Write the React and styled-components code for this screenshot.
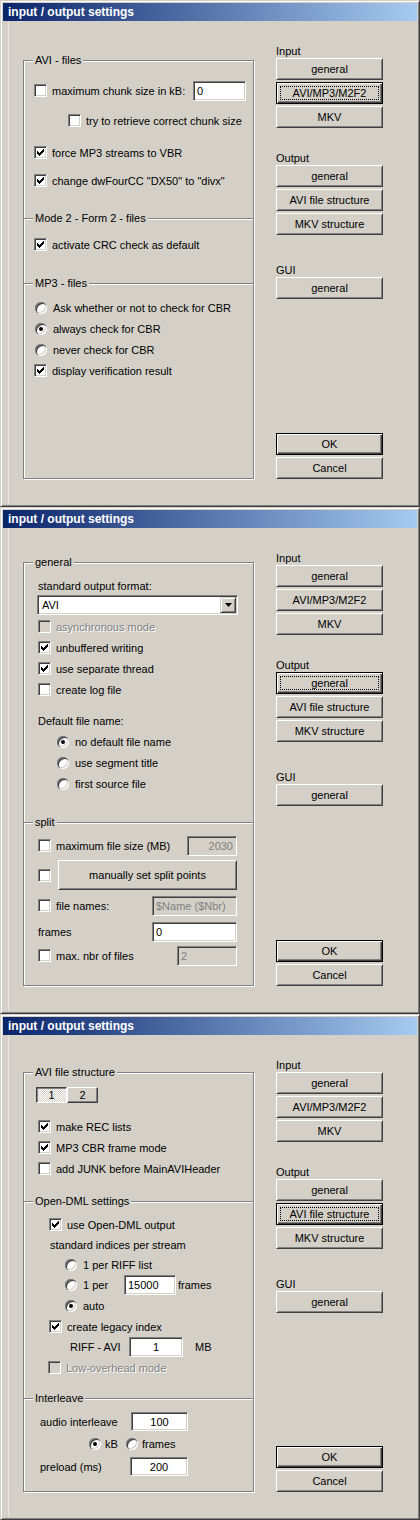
import React from "react";
import styled, { createGlobalStyle, css } from "styled-components";

const GlobalStyle = createGlobalStyle`
  html, body { margin: 0; padding: 0; background: #d4d0c8; }
  body {
    font-family: "Liberation Sans", Arial, sans-serif;
    font-size: 11px;
    color: #000;
  }
`;

const Page = styled.div`
  width: 420px;
  display: flex;
  flex-direction: column;
`;

const Window = styled.div`
  box-sizing: border-box;
  width: 420px;
  height: ${(p) => p.$h || 507}px;
  background: #d4d0c8;
  border: 1px solid;
  border-color: #d4d0c8 #404040 #404040 #d4d0c8;
  box-shadow: inset 1px 1px 0 #fff, inset -1px -1px 0 #808080;
  padding: 2px;
  display: flex;
  flex-direction: column;
  overflow: hidden;
`;

const TitleBar = styled.div`
  flex: none;
  height: 18px;
  line-height: 18px;
  padding-left: 5px;
  background: linear-gradient(to right, #0a246a, #a6caf0);
  color: #fff;
  font-weight: bold;
  font-size: 12px;
`;

const Body = styled.div`
  flex: 1;
  display: flex;
  margin-left: 5px;
  padding-left: 14px;
  border-left: 1px solid #e9e7e1;
`;

const LeftCol = styled.div`
  width: 231px;
  display: flex;
  flex-direction: column;
  padding-bottom: 25px;
`;

const GroupBox = styled.div`
  flex: 1;
  display: flex;
  flex-direction: column;
  margin-top: ${(p) => p.$top - 21}px;
  border: 1px solid #808080;
  box-shadow: inset 1px 1px 0 #fff, 1px 1px 0 #fff;
`;

const Section = styled.div`
  display: flex;
  flex-direction: column;
  ${(p) =>
    p.$mt !== undefined &&
    css`
      margin-top: ${p.$mt}px;
      border-top: 1px solid #808080;
      box-shadow: inset 0 1px 0 #fff;
    `}
`;

const Legend = styled.div`
  display: flex;
  height: 13px;
  line-height: 13px;
  margin: -7px 0 -6px 9px;
`;

const LegendText = styled.span`
  background: #d4d0c8;
  padding: 0 2px;
`;

const Row = styled.div`
  flex: none;
  display: flex;
  align-items: center;
  height: ${(p) => p.$h ?? 21}px;
  margin-top: ${(p) => p.$mt ?? 0}px;
  padding-left: ${(p) => (p.$x ?? 24) - 24}px;
  padding-right: ${(p) => p.$pr ?? 0}px;
`;

const Text = styled.span`
  flex: none;
  white-space: nowrap;
  width: ${(p) => (p.$w ? `${p.$w}px` : "auto")};
  margin-left: ${(p) => p.$ml ?? 0}px;
  color: ${(p) => (p.$disabled ? "#808080" : "#000")};
  text-shadow: ${(p) => (p.$disabled ? "1px 1px 0 #fff" : "none")};
`;

const OptionWrap = styled.div`
  flex: none;
  display: flex;
  align-items: center;
  gap: ${(p) => p.$gap}px;
  width: ${(p) => (p.$w ? `${p.$w}px` : "auto")};
`;

const CheckBox = styled.span`
  box-sizing: border-box;
  flex: none;
  width: 13px;
  height: 13px;
  background: ${(p) => (p.$disabled ? "#d4d0c8" : "#fff")};
  border: 1px solid;
  border-color: #808080 #fff #fff #808080;
  box-shadow: inset 1px 1px 0 #404040, inset -1px -1px 0 #d4d0c8;
  display: flex;
  align-items: center;
  justify-content: center;
`;

const RadioBox = styled.span`
  flex: none;
  width: 12px;
  height: 12px;
  border-radius: 50%;
  background: #fff;
  box-shadow: inset 1px 1px 0 #808080, inset 2px 2px 0 #404040,
    inset -1px -1px 0 #fff, inset -2px -2px 0 #d4d0c8;
  display: flex;
  align-items: center;
  justify-content: center;
  &::after {
    content: "";
    width: 4px;
    height: 4px;
    border-radius: 50%;
    background: ${(p) => (p.$on ? "#000" : "transparent")};
  }
`;

const TextBox = styled.div`
  box-sizing: border-box;
  flex: none;
  width: ${(p) => p.$w}px;
  height: ${(p) => p.$h ?? 20}px;
  margin-left: ${(p) => (p.$auto ? "auto" : "0")};
  padding: 0 3px;
  background: ${(p) => (p.$disabled ? "#d4d0c8" : "#fff")};
  color: ${(p) => (p.$disabled ? "#808080" : "#000")};
  border: 1px solid;
  border-color: #808080 #fff #fff #808080;
  box-shadow: inset 1px 1px 0 #404040, inset -1px -1px 0 #d4d0c8;
  display: flex;
  align-items: center;
  white-space: nowrap;
  overflow: hidden;
  justify-content: ${(p) =>
    p.$align === "right" ? "flex-end" : p.$align === "center" ? "center" : "flex-start"};
`;

const Combo = styled.div`
  box-sizing: border-box;
  width: 201px;
  height: 20px;
  padding: 1px 1px 1px 4px;
  background: #fff;
  border: 1px solid;
  border-color: #808080 #fff #fff #808080;
  box-shadow: inset 1px 1px 0 #404040, inset -1px -1px 0 #d4d0c8;
  display: flex;
  align-items: center;
`;

const ComboValue = styled.span`
  flex: 1;
`;

const ComboArrow = styled.div`
  box-sizing: border-box;
  width: 16px;
  height: 16px;
  background: #d4d0c8;
  border: 1px solid;
  border-color: #d4d0c8 #404040 #404040 #d4d0c8;
  box-shadow: inset 1px 1px 0 #fff, inset -1px -1px 0 #808080;
  display: flex;
  align-items: center;
  justify-content: center;
`;

const Button = styled.div`
  box-sizing: border-box;
  position: relative;
  flex: none;
  width: ${(p) => p.$w ?? 107}px;
  height: ${(p) => p.$h ?? 22}px;
  margin-left: ${(p) => (p.$auto ? "auto" : "0")};
  background: #d4d0c8;
  border: 1px solid;
  border-color: #fff #404040 #404040 #fff;
  box-shadow: inset 1px 1px 0 #d4d0c8, inset -1px -1px 0 #808080;
  display: flex;
  align-items: center;
  justify-content: center;
  white-space: nowrap;
  ${(p) =>
    (p.$default || p.$focus) &&
    css`
      border-color: #000;
      box-shadow: inset 1px 1px 0 #fff, inset -1px -1px 0 #404040,
        inset -2px -2px 0 #808080;
    `}
  ${(p) =>
    p.$focus &&
    css`
      &::after {
        content: "";
        position: absolute;
        inset: 3px;
        border: 1px dotted #000;
      }
    `}
`;

const Tab = styled.div`
  box-sizing: border-box;
  width: 31px;
  height: 16px;
  display: flex;
  align-items: center;
  justify-content: center;
  border: 1px solid;
  ${(p) =>
    p.$pressed
      ? css`
          border-color: #404040 #fff #fff #404040;
          box-shadow: inset 1px 1px 0 #808080;
          background: repeating-conic-gradient(#fff 0 25%, #d4d0c8 0 50%) 0 0 / 2px 2px;
        `
      : css`
          border-color: #fff #404040 #404040 #fff;
          box-shadow: inset -1px -1px 0 #808080;
          background: #d4d0c8;
        `}
`;

const RightCol = styled.div`
  width: 107px;
  margin-left: 22px;
  padding: 24px 0 25px;
  display: flex;
  flex-direction: column;
`;

const SideLabel = styled.div`
  height: 13px;
  line-height: 13px;
  margin-top: ${(p) => p.$mt ?? 0}px;
`;

const BtnStack = styled.div`
  display: flex;
  flex-direction: column;
  gap: 2px;
  margin-top: ${(p) => (p.$bottom ? "auto" : "0")};
`;

const CheckMark = ({ color }) => (
  <svg width="7" height="7" viewBox="0 0 7 7">
    <path
      fill={color}
      d="M6 0h1v1h-1zM5 1h2v1h-2zM0 2h1v1h-1zM4 2h3v1h-3zM0 3h2v1h-2zM3 3h3v1h-3zM0 4h5v1h-5zM1 5h3v1h-3zM2 6h1v1h-1z"
    />
  </svg>
);

const Check = ({ on, disabled }) => (
  <CheckBox $disabled={disabled}>{on && <CheckMark color={disabled ? "#808080" : "#000"} />}</CheckBox>
);

const Option = ({ radio, on, disabled, label, w, gap }) => (
  <OptionWrap $w={w} $gap={gap ?? (radio ? 6 : 5)}>
    {radio ? <RadioBox $on={on} /> : <Check on={on} disabled={disabled} />}
    <Text $disabled={disabled}>{label}</Text>
  </OptionWrap>
);

const Group = ({ label, mt, children }) => (
  <Section $mt={mt}>
    <Legend>
      <LegendText>{label}</LegendText>
    </Legend>
    {children}
  </Section>
);

const SidePanel = ({ focus }) => (
  <RightCol>
    <SideLabel>Input</SideLabel>
    <BtnStack>
      <Button $focus={focus === "in-general"}>general</Button>
      <Button $focus={focus === "avi-mp3"}>AVI/MP3/M2F2</Button>
      <Button>MKV</Button>
    </BtnStack>
    <SideLabel $mt={24}>Output</SideLabel>
    <BtnStack>
      <Button $focus={focus === "out-general"}>general</Button>
      <Button $focus={focus === "avi-struct"}>AVI file structure</Button>
      <Button>MKV structure</Button>
    </BtnStack>
    <SideLabel $mt={29}>GUI</SideLabel>
    <BtnStack>
      <Button>general</Button>
    </BtnStack>
    <BtnStack $bottom>
      <Button $default>OK</Button>
      <Button>Cancel</Button>
    </BtnStack>
  </RightCol>
);

const Dialog = ({ h, focus, children }) => (
  <Window $h={h}>
    <TitleBar>input / output settings</TitleBar>
    <Body>
      <LeftCol>{children}</LeftCol>
      <SidePanel focus={focus} />
    </Body>
  </Window>
);

const DownArrow = () => (
  <svg width="7" height="4" viewBox="0 0 7 4">
    <path d="M0 0h7L3.5 4z" fill="#000" />
  </svg>
);

const InputFiles = () => (
  <Dialog focus="avi-mp3">
    <GroupBox $top={60}>
      <Group label="AVI - files">
        <Row $x={34} $mt={19} $pr={7}>
          <Option label="maximum chunk size in kB:" />
          <TextBox $w={53} $auto>0</TextBox>
        </Row>
        <Row $x={68} $mt={9}>
          <Option label="try to retrieve correct chunk size" />
        </Row>
        <Row $x={34} $mt={11}>
          <Option on label="force MP3 streams to VBR" />
        </Row>
        <Row $x={34} $mt={7}>
          <Option on label={'change dwFourCC "DX50" to "divx"'} />
        </Row>
      </Group>
      <Group label="Mode 2 - Form 2 - files" mt={27}>
        <Row $x={34} $mt={15}>
          <Option on label="activate CRC check as default" />
        </Row>
      </Group>
      <Group label="MP3 - files" mt={28}>
        <Row $x={35} $mt={13}>
          <Option radio label="Ask whether or not to check for CBR" />
        </Row>
        <Row $x={35}>
          <Option radio on label="always check for CBR" />
        </Row>
        <Row $x={35}>
          <Option radio label="never check for CBR" />
        </Row>
        <Row $x={34}>
          <Option on label="display verification result" />
        </Row>
      </Group>
    </GroupBox>
  </Dialog>
);

const OutputGeneral = () => (
  <Dialog focus="out-general">
    <GroupBox $top={55}>
      <Group label="general">
        <Row $x={38} $h={16} $mt={15}>
          <Text>standard output format:</Text>
        </Row>
        <Row $x={37} $h={20} $mt={1}>
          <Combo>
            <ComboValue>AVI</ComboValue>
            <ComboArrow>
              <DownArrow />
            </ComboArrow>
          </Combo>
        </Row>
        <Row $x={38} $mt={1}>
          <Option disabled label="asynchronous mode" />
        </Row>
        <Row $x={38}>
          <Option on label="unbuffered writing" />
        </Row>
        <Row $x={38}>
          <Option on label="use separate thread" />
        </Row>
        <Row $x={38}>
          <Option label="create log file" />
        </Row>
        <Row $x={38} $mt={10}>
          <Text>Default file name:</Text>
        </Row>
        <Row $x={57}>
          <Option radio on label="no default file name" />
        </Row>
        <Row $x={57}>
          <Option radio label="use segment title" />
        </Row>
        <Row $x={57}>
          <Option radio label="first source file" />
        </Row>
      </Group>
      <Group label="split" mt={28}>
        <Row $x={38} $mt={12} $pr={16}>
          <Option label="maximum file size (MB)" />
          <TextBox $w={50} $auto $disabled $align="right">
            2030
          </TextBox>
        </Row>
        <Row $x={38} $h={30} $mt={4} $pr={16}>
          <Check />
          <Button $w={179} $h={30} $auto>
            manually set split points
          </Button>
        </Row>
        <Row $x={38} $mt={5} $pr={16}>
          <Option label="file names:" />
          <TextBox $w={85} $auto $disabled>
            $Name ($Nbr)
          </TextBox>
        </Row>
        <Row $x={38} $mt={5} $pr={16}>
          <Text>frames</Text>
          <TextBox $w={85} $auto>
            0
          </TextBox>
        </Row>
        <Row $x={38} $mt={3} $pr={16}>
          <Option label="max. nbr of files" />
          <TextBox $w={60} $auto $disabled>
            2
          </TextBox>
        </Row>
      </Group>
    </GroupBox>
  </Dialog>
);

const AviStructure = () => (
  <Dialog h={506} focus="avi-struct">
    <GroupBox $top={58}>
      <Group label="AVI file structure">
        <Row $x={36} $h={16} $mt={14}>
          <Tab $pressed>1</Tab>
          <Tab>2</Tab>
        </Row>
        <Row $x={38} $mt={13}>
          <Option on label="make REC lists" />
        </Row>
        <Row $x={38}>
          <Option on label="MP3 CBR frame mode" />
        </Row>
        <Row $x={38}>
          <Option label="add JUNK before MainAVIHeader" />
        </Row>
      </Group>
      <Group label="Open-DML settings" mt={22}>
        <Row $x={49} $mt={12}>
          <Option on label="use Open-DML output" />
        </Row>
        <Row $x={50} $h={19}>
          <Text>standard indices per stream</Text>
        </Row>
        <Row $x={65}>
          <Option radio label="1 per RIFF list" />
        </Row>
        <Row $x={65} $h={20}>
          <RadioBox />
          <Text $ml={6} $w={41}>
            1 per
          </Text>
          <TextBox $w={52}>15000</TextBox>
          <Text $ml={2}>frames</Text>
        </Row>
        <Row $x={65}>
          <Option radio on label="auto" />
        </Row>
        <Row $x={49}>
          <Option on label="create legacy index" />
        </Row>
        <Row $x={70} $h={20}>
          <Text $w={59}>RIFF - AVI</Text>
          <TextBox $w={54} $align="center">
            1
          </TextBox>
          <Text $ml={12}>MB</Text>
        </Row>
        <Row $x={48}>
          <Option disabled label="Low-overhead mode" />
        </Row>
      </Group>
      <Group label="Interleave" mt={20}>
        <Row $x={40} $mt={12}>
          <Text $w={91}>audio interleave</Text>
          <TextBox $w={57} $h={19} $align="center">
            100
          </TextBox>
        </Row>
        <Row $x={89} $mt={1}>
          <Option radio on gap={4} w={37} label="kB" />
          <Option radio gap={4} label="frames" />
        </Row>
        <Row $x={40} $mt={2}>
          <Text $w={90}>preload (ms)</Text>
          <TextBox $w={58} $h={19} $align="center">
            200
          </TextBox>
        </Row>
      </Group>
    </GroupBox>
  </Dialog>
);

export default function App() {
  return (
    <>
      <GlobalStyle />
      <Page>
        <InputFiles />
        <OutputGeneral />
        <AviStructure />
      </Page>
    </>
  );
}
